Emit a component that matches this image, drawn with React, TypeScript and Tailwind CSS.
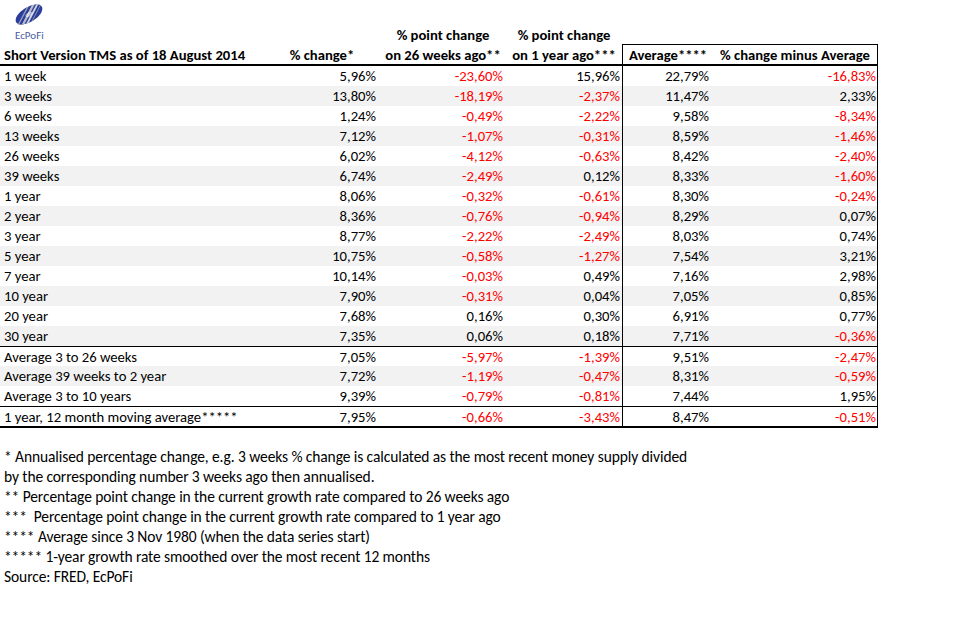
import React from "react";

type Row = { label: string; v: string[]; bg?: boolean; top?: boolean };

const rows: Row[] = [
  { label: "1 week", v: ["5,96%", "-23,60%", "15,96%", "22,79%", "-16,83%"] },
  { label: "3 weeks", v: ["13,80%", "-18,19%", "-2,37%", "11,47%", "2,33%"], bg: true },
  { label: "6 weeks", v: ["1,24%", "-0,49%", "-2,22%", "9,58%", "-8,34%"] },
  { label: "13 weeks", v: ["7,12%", "-1,07%", "-0,31%", "8,59%", "-1,46%"], bg: true },
  { label: "26 weeks", v: ["6,02%", "-4,12%", "-0,63%", "8,42%", "-2,40%"] },
  { label: "39 weeks", v: ["6,74%", "-2,49%", "0,12%", "8,33%", "-1,60%"], bg: true },
  { label: "1 year", v: ["8,06%", "-0,32%", "-0,61%", "8,30%", "-0,24%"] },
  { label: "2 year", v: ["8,36%", "-0,76%", "-0,94%", "8,29%", "0,07%"], bg: true },
  { label: "3 year", v: ["8,77%", "-2,22%", "-2,49%", "8,03%", "0,74%"] },
  { label: "5 year", v: ["10,75%", "-0,58%", "-1,27%", "7,54%", "3,21%"], bg: true },
  { label: "7 year", v: ["10,14%", "-0,03%", "0,49%", "7,16%", "2,98%"] },
  { label: "10 year", v: ["7,90%", "-0,31%", "0,04%", "7,05%", "0,85%"], bg: true },
  { label: "20 year", v: ["7,68%", "0,16%", "0,30%", "6,91%", "0,77%"] },
  { label: "30 year", v: ["7,35%", "0,06%", "0,18%", "7,71%", "-0,36%"], bg: true },
  { label: "Average 3 to 26 weeks", v: ["7,05%", "-5,97%", "-1,39%", "9,51%", "-2,47%"], top: true },
  { label: "Average 39 weeks to 2 year", v: ["7,72%", "-1,19%", "-0,47%", "8,31%", "-0,59%"], bg: true },
  { label: "Average 3 to 10 years", v: ["9,39%", "-0,79%", "-0,81%", "7,44%", "1,95%"] },
  { label: "1 year, 12 month moving average*****", v: ["7,95%", "-0,66%", "-3,43%", "8,47%", "-0,51%"], top: true },
];

const notes = [
  "* Annualised percentage change, e.g. 3 weeks % change is calculated as the most recent money supply divided",
  "by the corresponding number 3 weeks ago then annualised.",
  "** Percentage point change in the current growth rate compared to 26 weeks ago",
  "***  Percentage point change in the current growth rate compared to 1 year ago",
  "**** Average since 3 Nov 1980 (when the data series start)",
  "***** 1-year growth rate smoothed over the most recent 12 months",
  "Source: FRED, EcPoFi",
];

const grid = "grid grid-cols-[262px_118px_126px_116px_91px_165px] w-[878px]";

function Logo() {
  return (
    <div className="flex flex-col items-start pl-[14px] pt-[3px]">
      <svg width="30" height="23" viewBox="0 0 30 23">
        <defs>
          <clipPath id="lens">
            <ellipse cx="15" cy="11.5" rx="15" ry="7.5" transform="rotate(-32 15 11.5)" />
          </clipPath>
        </defs>
        <g clipPath="url(#lens)">
          <rect x="0" y="0" width="30" height="23" fill="#2b3d9c" />
          <path d="M7 23 L19 0 L21.5 0 L9.5 23 Z" fill="#b9bdc9" />
          <path d="M11 23 L23 0 L25 0 L13 23 Z" fill="#d7dae2" />
          <path d="M3 23 L15 0 L16.5 0 L4.5 23 Z" fill="#9aa0b6" />
          <path d="M15 23 L27 0 L28 0 L16 23 Z" fill="#8b92ad" />
        </g>
        <ellipse cx="15" cy="11.5" rx="4" ry="2" transform="rotate(-32 15 11.5)" fill="#ffffff" opacity="0.5" />
      </svg>
      <span className="text-[11px] leading-[12px] mt-[4px] ml-[1px] text-[#4b5aa0]">EcPoFi</span>
    </div>
  );
}

export default function App() {
  return (
    <div className="w-[978px] h-[640px] bg-white text-black font-['Carlito','Lato',sans-serif] text-[14.67px] leading-[20px]">
      {/* Header row 1 */}
      <div className={`${grid} h-[44px]`}>
        <div className="h-[44px]">
          <Logo />
        </div>
        <div />
        <div className="font-bold text-center self-end h-[20px] pt-[1px]">% point change</div>
        <div className="font-bold text-center self-end h-[20px] pt-[1px]">% point change</div>
        <div />
        <div />
      </div>
      {/* Header row 2 */}
      <div className={`${grid} h-[22px] border-b-2 border-black`}>
        <div className="font-bold pl-[4px] pt-[1px] whitespace-nowrap">Short Version TMS as of 18 August 2014</div>
        <div className="font-bold text-center pl-[2px] pt-[1px]">% change*</div>
        <div className="font-bold text-center pt-[1px] whitespace-nowrap">on 26 weeks ago**</div>
        <div className="font-bold text-center pt-[1px] whitespace-nowrap">on 1 year ago***</div>
        <div className="font-bold text-center border-l border-t border-black">Average****</div>
        <div className="font-bold text-center whitespace-nowrap border-r border-t border-black">% change minus Average</div>
      </div>
      {/* Data rows */}
      <div className="w-[878px] border-b-2 border-black">
        {rows.map((r) => (
          <div
            key={r.label}
            className={`${grid} h-[20px] ${r.bg ? "bg-[#f2f2f2]" : "bg-white"} ${r.top ? "border-t border-black" : ""}`}
          >
            <div className="pl-[4px] whitespace-nowrap">{r.label}</div>
            {r.v.map((val, i) => (
              <div
                key={i}
                className={`text-right ${i === 0 ? "pr-[4px]" : i === 1 ? "pr-[3px]" : i === 2 ? "pr-[2px]" : i === 3 ? "pr-[4px] border-l border-black" : "pr-[1px] border-r border-black"} ${val.startsWith("-") ? "text-[#ff0000]" : ""}`}
              >
                {val}
              </div>
            ))}
          </div>
        ))}
      </div>
      {/* Footnotes */}
      <div className="pt-[19px] pl-[4px] flex flex-col text-[15.5px] tracking-[-0.1px]">
        {notes.map((n) => (
          <div key={n} className="h-[20px] leading-[20px] whitespace-pre">
            {n}
          </div>
        ))}
      </div>
    </div>
  );
}
